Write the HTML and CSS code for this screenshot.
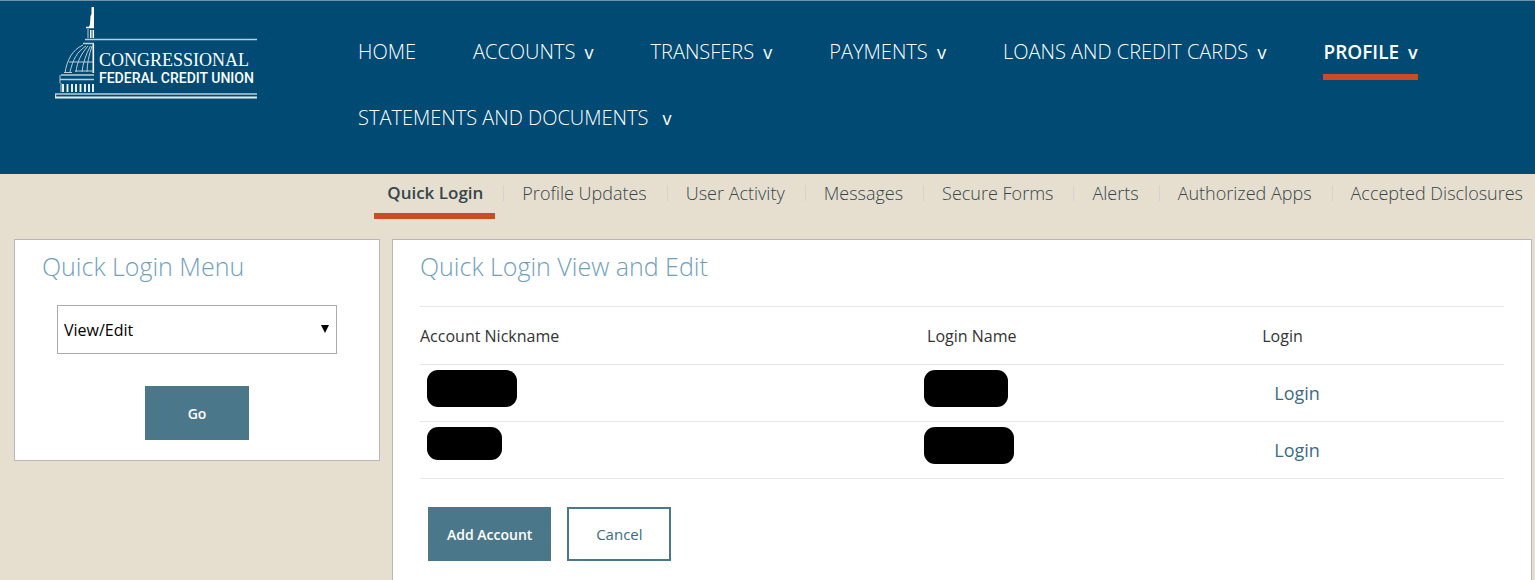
FILE: index.html
```html
<!DOCTYPE html>
<html lang="en">
<head>
    <meta charset="UTF-8">
    <meta name="viewport" content="width=device-width, initial-scale=1.0">
    <title>Quick Login</title>
    <link rel="stylesheet" href="styles.css">
</head>
<body>
    <header class="header">
        <a class="logo" href="#" aria-label="Congressional Federal Credit Union">
            <svg width="202" height="94" viewBox="0 0 202 94" fill="none" stroke="#b9cedc">
                <!-- statue -->
                <path d="M36.500 0h2.500v20h-5l1-3 .5-8 1-2z" fill="#fff" stroke="none"/>
                <path d="M31 20.500h8" stroke="#fff" stroke-width="1.500"/>
                <path d="M33 22v9" />
                <path d="M35.800 23v8M38.300 23v8" stroke="#fff" stroke-width="1.500"/>
                <path d="M30 32.500h172M28 36.500h11" stroke-width="1.600"/>
                <!-- dome -->
                <path d="M28 38C17 43 12 53 10 66M31 39C22 45 18 52 15 65M33 39C26 47 22 55 21 65M35.500 39C31 47 28 56 27 65M37 39C34 48 32 57 32 65"/>
                <path d="M38.300 37v29" stroke="#fff" stroke-width="1.600"/>
                <path d="M14 55h24M9 65.500h8M20 64h19" />
                <path d="M6 68h33M5 72.500h34" stroke-width="1.500"/>
                <path d="M5 68v8M6 76v9" />
                <path d="M8 77v8M12.500 77v8M17 77v8M21 77v8M25.500 77v8M30 77v8M34 77v8M38 77v8" stroke="#fff" stroke-width="1.800"/>
                <path d="M.5 90v-3h201.500" stroke-width="1.500"/>
                <path d="M0 90.500h202" stroke="#e5edf2" stroke-width="1.800"/>
                <text class="logo-name" x="44" y="59" stroke="none" fill="#fff">CONGRESSIONAL</text>
                <text class="logo-sub" x="44" y="76" stroke="none" fill="#fff">FEDERAL CREDIT UNION</text>
            </svg>
        </a>
        <nav class="main-nav">
            <a href="#">HOME</a>
            <a href="#">ACCOUNTS <span class="caret">v</span></a>
            <a href="#">TRANSFERS <span class="caret">v</span></a>
            <a href="#">PAYMENTS <span class="caret">v</span></a>
            <a href="#">LOANS AND CREDIT CARDS <span class="caret">v</span></a>
            <a href="#" class="active">PROFILE <span class="caret">v</span></a>
            <a href="#" class="wide">STATEMENTS AND DOCUMENTS <span class="caret">v</span></a>
        </nav>
    </header>

    <nav class="sub-nav">
        <a href="#" class="active">Quick Login</a>
        <a href="#">Profile Updates</a>
        <a href="#">User Activity</a>
        <a href="#">Messages</a>
        <a href="#">Secure Forms</a>
        <a href="#">Alerts</a>
        <a href="#">Authorized Apps</a>
        <a href="#">Accepted Disclosures</a>
    </nav>

    <main class="content">
        <section class="panel menu">
            <h2><label for="menu-action">Quick Login Menu</label></h2>
            <form class="menu-form">
                <div class="select-wrap">
                    <select id="menu-action">
                        <option>View/Edit</option>
                    </select>
                    <svg class="arrow" width="8" height="8" viewBox="0 0 8 8"><path d="M0 0h8L4 8z"/></svg>
                </div>
                <button type="button" class="btn">Go</button>
            </form>
        </section>

        <section class="panel accounts">
            <h2>Quick Login View and Edit</h2>
            <table>
                <thead>
                    <tr>
                        <th class="col-nickname">Account Nickname</th>
                        <th class="col-name">Login Name</th>
                        <th>Login</th>
                    </tr>
                </thead>
                <tbody>
                    <tr>
                        <td class="nickname"><span class="masked large"></span></td>
                        <td><span class="masked medium"></span></td>
                        <td class="login"><a href="#">Login</a></td>
                    </tr>
                    <tr>
                        <td class="nickname"><span class="masked small"></span></td>
                        <td><span class="masked large"></span></td>
                        <td class="login"><a href="#">Login</a></td>
                    </tr>
                </tbody>
            </table>
            <div class="actions">
                <button type="button" class="btn">Add Account</button>
                <button type="button" class="btn btn-outline">Cancel</button>
            </div>
        </section>
    </main>
</body>
</html>
```
FILE: styles.css
```css
* {
    box-sizing: border-box;
}
body {
    margin: 0;
    min-height: 100vh;
    display: flex;
    flex-direction: column;
    background: #e6dece;
    color: #333;
    font-family: "Open Sans", "Noto Sans", sans-serif;
    font-size: 16px;
}
a {
    text-decoration: none;
}
.header {
    display: flex;
    align-items: flex-start;
    min-height: 174px;
    padding: 6px 55px 0;
    background: #004a73;
    border-top: 1px solid #6b94ae;
}
.logo {
    flex: none;
    margin-right: 101px;
}
.logo svg {
    display: block;
}
.logo-name {
    font-family: "Liberation Serif", serif;
    font-size: 18px;
}
.logo-sub {
    font-family: Roboto, sans-serif;
    font-size: 14px;
    font-weight: 500;
}
.main-nav {
    display: flex;
    flex-wrap: wrap;
    column-gap: 57px;
    row-gap: 18px;
    padding-top: 25px;
}
.main-nav a {
    height: 48px;
    line-height: 40px;
    color: #fff;
    font-size: 20px;
    font-weight: 300;
}
.main-nav .caret {
    margin-left: 4px;
    font-size: 18px;
    font-weight: 400;
}
.main-nav .wide .caret {
    margin-left: 9px;
}
.main-nav .active {
    border-bottom: 6px solid #cb4b24;
    font-size: 19px;
    font-weight: 600;
}
.main-nav .active .caret {
    font-weight: 600;
}
.sub-nav {
    display: flex;
    justify-content: flex-end;
    height: 65px;
}
.sub-nav a {
    position: relative;
    height: 45px;
    margin-left: 14px;
    padding: 0 12px 0 13px;
    line-height: 38px;
    color: #35464d;
    font-size: 18px;
    font-weight: 300;
    white-space: nowrap;
}
.sub-nav a + a::before {
    content: "";
    position: absolute;
    top: 11px;
    left: -6px;
    height: 16px;
    border-left: 1px solid #d9d1cd;
}
.sub-nav .active {
    border-bottom: 6px solid #cb4b24;
    font-size: 17px;
    font-weight: 600;
}
.content {
    flex: 1;
    display: flex;
    gap: 12px;
    padding: 0 3px 0 14px;
}
.panel {
    background: #fff;
    border: 1px solid #bdb5be;
}
.panel h2 {
    margin: 0;
    color: #6f9fbd;
    font-size: 25px;
    font-weight: 300;
    line-height: 34px;
}
.menu {
    flex: none;
    align-self: flex-start;
    width: 366px;
    padding: 9px 27px 20px;
}
.menu-form {
    display: flex;
    flex-direction: column;
    align-items: center;
    gap: 32px;
    padding: 22px 15px 0;
}
.select-wrap {
    position: relative;
    width: 100%;
}
.select-wrap select {
    display: block;
    width: 100%;
    height: 49px;
    padding: 0 6px;
    appearance: none;
    background: #fff;
    border: 1px solid #aea8b0;
    border-radius: 0;
    color: #000;
    font-family: inherit;
    font-size: 16px;
}
.arrow {
    position: absolute;
    top: 20px;
    right: 8px;
    pointer-events: none;
}
.btn {
    min-width: 104px;
    height: 54px;
    padding: 0 19px;
    background: #4a788a;
    border: 0;
    color: #fff;
    font-family: inherit;
    font-size: 14px;
    font-weight: 600;
}
.btn-outline {
    background: #fff;
    border: 2px solid #4a788a;
    color: #3b6b82;
    font-size: 15px;
    font-weight: 400;
}
.accounts {
    flex: 1;
    padding: 9px 27px 19px;
    border-bottom: 0;
}
table {
    width: 100%;
    margin-top: 23px;
    border-collapse: collapse;
    table-layout: fixed;
    border-top: 1px solid #e6e6e6;
}
tr {
    height: 57px;
    border-bottom: 1px solid #e6e6e6;
}
thead tr {
    height: 58px;
}
th {
    padding: 0;
    font-weight: 400;
    text-align: left;
}
td {
    padding: 5px 0 0;
    vertical-align: top;
}
.col-nickname {
    width: 46.5%;
}
.col-name {
    width: 31.2%;
    padding-left: 3px;
}
.nickname {
    padding-left: 7px;
}
.masked {
    display: block;
    height: 37px;
    background: #000;
    border-radius: 11px;
}
.masked.large {
    width: 90px;
}
.masked.medium {
    width: 84px;
}
.masked.small {
    width: 75px;
    height: 33px;
}
.login {
    padding: 0 0 0 12px;
    vertical-align: middle;
}
.login a {
    color: #3b6b82;
    font-size: 18px;
}
.actions {
    display: flex;
    gap: 16px;
    padding: 28px 8px 0;
}
```
